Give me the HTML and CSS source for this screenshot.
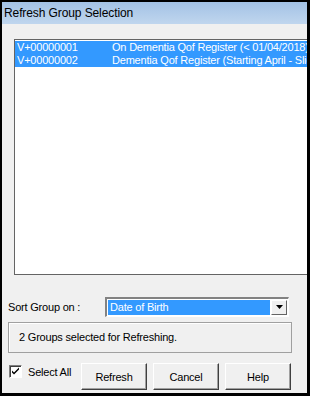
FILE: index.html
```html
<!DOCTYPE html>
<html>
<head>
<meta charset="utf-8">
<link rel="stylesheet" href="styles.css">
</head>
<body>
<div class="window">
  <div class="titlebar">Refresh Group Selection</div>
  <div class="content">
    <div class="listbox">
      <div class="row sel"><span class="code">V+00000001</span><span class="name">On Dementia Qof Register (&lt; 01/04/2018)</span></div>
      <div class="row sel"><span class="code">V+00000002</span><span class="name">Dementia Qof Register (Starting April - Slice)</span></div>
    </div>
    <div class="sortrow">
      <span class="label">Sort Group on :</span>
      <div class="combo">
        <div class="field"><span>Date of Birth</span></div>
        <div class="dropbtn"><svg width="9" height="5" viewBox="0 0 9 5"><path d="M1 0h7l-3.5 4z" fill="#000"/></svg></div>
      </div>
    </div>
    <div class="status">2 Groups selected for Refreshing.</div>
    <div class="bottomrow">
      <label class="check"><span class="box"><svg width="9" height="9" viewBox="0 0 9 9"><path d="M1 3.5l2 2 5-5v2l-5 5-2-2z" fill="#000"/></svg></span>Select All</label>
      <div class="buttons">
        <button class="btn">Refresh</button>
        <button class="btn">Cancel</button>
        <button class="btn">Help</button>
      </div>
    </div>
  </div>
</div>
</body>
</html>
```
FILE: styles.css
```css
html, body {
  margin: 0;
  padding: 0;
  background: #000;
  width: 310px;
  height: 396px;
  overflow: hidden;
}
.window {
  margin: 2px 3px 3px 2px;
  width: 305px;
  height: 391px;
  background: #f0f0f0;
  overflow: hidden;
  display: flex;
  flex-direction: column;
  font-family: "Liberation Sans", Arial, sans-serif;
  font-size: 11px;
  letter-spacing: -0.2px;
  color: #000;
}
.titlebar {
  height: 22px;
  flex: none;
  background: linear-gradient(#a3c2e5, #c0d6ee);
  font-family: "Liberation Sans", Arial, sans-serif;
  font-size: 12px;
  letter-spacing: -0.1px;
  line-height: 22px;
  padding-left: 2px;
  color: #000;
}
.content {
  display: flex;
  flex-direction: column;
  padding: 15px 0 0 0;
}
.listbox {
  margin-left: 12px;
  width: 300px;
  height: 233px;
  border: 1px solid #646464;
  background: #fff;
  padding-top: 1px;
  box-sizing: content-box;
  flex: none;
}
.row {
  height: 13px;
  line-height: 13px;
  display: flex;
  white-space: nowrap;
}
.row.sel {
  background: #3399ff;
  color: #fff;
}
.code {
  width: 95px;
  padding-left: 2px;
  flex: none;
}
.name {
  flex: none;
}
.sortrow {
  display: flex;
  align-items: center;
  margin-top: 22px;
  padding-left: 6px;
  height: 20px;
}
.label {
  width: 97px;
}
.combo {
  display: flex;
  width: 184px;
  height: 20px;
  box-sizing: border-box;
  border-top: 2px solid #828282;
  border-left: 2px solid #828282;
  border-bottom: 1px solid #fff;
  border-right: 1px solid #fff;
  background: #fff;
  padding: 1px;
}
.field {
  flex: 1;
  background: #3399ff;
  color: #fff;
  line-height: 14px;
  padding-left: 2px;
  margin-right: 1px;
}
.dropbtn {
  width: 16px;
  box-sizing: border-box;
  background: #f0f0f0;
  border-top: 1px solid #fff;
  border-left: 1px solid #fff;
  border-right: 1px solid #646464;
  border-bottom: 1px solid #646464;
  display: flex;
  align-items: center;
  justify-content: center;
}
.status {
  margin: 5px 0 0 6px;
  width: 284px;
  height: 31px;
  box-sizing: border-box;
  border: 1px solid #a0a0a0;
  box-shadow: inset 1px 1px 0 #fff;
  padding-left: 10px;
  line-height: 29px;
}
.bottomrow {
  display: flex;
  align-items: flex-start;
  margin-top: 10px;
  padding-left: 7px;
}
.check {
  display: flex;
  align-items: center;
  gap: 6px;
  margin-top: 2px;
  width: 72px;
}
.box {
  width: 13px;
  height: 13px;
  box-sizing: border-box;
  background: #fff;
  border-top: 1px solid #808080;
  border-left: 1px solid #808080;
  border-right: 1px solid #fff;
  border-bottom: 1px solid #fff;
  box-shadow: inset 1px 1px 0 #404040;
  display: flex;
  align-items: center;
  justify-content: center;
}
.buttons {
  display: flex;
  gap: 6px;
}
.btn {
  width: 66px;
  height: 27px;
  box-sizing: border-box;
  background: #f0f0f0;
  font-family: "Liberation Sans", Arial, sans-serif;
  font-size: 11px;
  letter-spacing: -0.2px;
  color: #000;
  border-top: 1px solid #fff;
  border-left: 1px solid #fff;
  border-right: 1px solid #404040;
  border-bottom: 1px solid #404040;
  box-shadow: inset -1px -1px 0 #a0a0a0;
  padding: 0;
  margin: 0;
}
```
